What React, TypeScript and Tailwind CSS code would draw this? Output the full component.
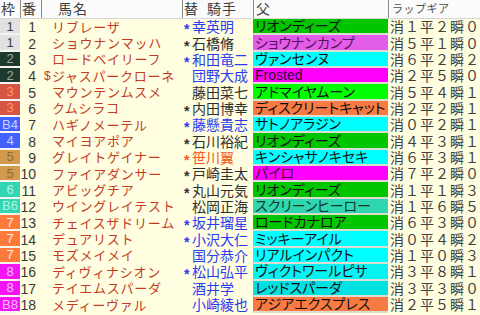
import React from "react";

type Row = {
  w: number;
  n: number;
  label: string;
  pre: string;
  name: string;
  ast: boolean;
  jockey: string;
  jc: string;
  sire: string;
  sc: string;
  st: string;
  lap: string;
};

const WAKU: Record<number, string> = {
  1: "bg-[#e2e2e2] text-[#404040]",
  2: "bg-[#1e3a2c] text-[#9aa8a0]",
  3: "bg-[#d65444] text-[#ff9a60]",
  4: "bg-[#4262ff] text-[#c8d0ff]",
  5: "bg-[#d29a4a] text-[#8a6a40]",
  6: "bg-[#33d6b2] text-[#b0f4e4]",
  7: "bg-[#ff7a3a] text-[#fff0e6]",
  8: "bg-[#f414f4] text-[#ffc0ff]",
};

const BLUE = "text-[#2a3cf0]";
const BLACK = "text-[#303030]";
const ORANGE = "text-[#f25a1e]";

const G = "bg-[#00c600]";
const LIME = "bg-[#00ff00]";
const CY = "bg-[#00ffff]";
const MAG = "bg-[#ff00ff]";
const OR = "bg-[#f97a42]";
const PINK = "bg-[#e25ee8]";
const TEAL = "bg-[#30d6b0]";

const rows: Row[] = [
  { w: 1, n: 1, label: "1", pre: "", name: "リブレーザ", ast: true, jockey: "幸英明", jc: BLUE, sire: "リオンディーズ", sc: G, st: "text-[#101010]", lap: "消１平２瞬０" },
  { w: 1, n: 2, label: "1", pre: "", name: "ショウナンマッハ", ast: true, jockey: "石橋脩", jc: BLACK, sire: "ショウナンカンプ", sc: PINK, st: "text-[#5a1060]", lap: "消５平１瞬０" },
  { w: 2, n: 3, label: "2", pre: "", name: "ロードベイリーフ", ast: true, jockey: "和田竜二", jc: BLUE, sire: "ヴァンセンヌ", sc: CY, st: "text-[#101010]", lap: "消６平２瞬２" },
  { w: 2, n: 4, label: "2", pre: "$", name: "ジャスパークローネ", ast: false, jockey: "団野大成", jc: BLUE, sire: "Frosted", sc: MAG, st: "text-[#301030]", lap: "消２平５瞬０" },
  { w: 3, n: 5, label: "3", pre: "", name: "マウンテンムスメ", ast: false, jockey: "藤田菜七", jc: BLACK, sire: "アドマイヤムーン", sc: LIME, st: "text-[#101010]", lap: "消５平４瞬１" },
  { w: 3, n: 6, label: "3", pre: "", name: "クムシラコ", ast: true, jockey: "内田博幸", jc: BLACK, sire: "ディスクリートキャット", sc: OR, st: "text-[#101010]", lap: "消２平２瞬１" },
  { w: 4, n: 7, label: "B4", pre: "", name: "ハギノメーテル", ast: true, jockey: "藤懸貴志", jc: BLUE, sire: "サトノアラジン", sc: CY, st: "text-[#101010]", lap: "消０平２瞬１" },
  { w: 4, n: 8, label: "4", pre: "", name: "マイヨアポア", ast: true, jockey: "石川裕紀", jc: BLACK, sire: "リオンディーズ", sc: G, st: "text-[#101010]", lap: "消４平３瞬１" },
  { w: 5, n: 9, label: "5", pre: "", name: "グレイトゲイナー", ast: true, jockey: "笹川翼", jc: ORANGE, sire: "キンシャサノキセキ", sc: CY, st: "text-[#101010]", lap: "消６平３瞬１" },
  { w: 5, n: 10, label: "5", pre: "", name: "ファイアダンサー", ast: true, jockey: "戸崎圭太", jc: BLACK, sire: "パイロ", sc: MAG, st: "text-[#301030]", lap: "消７平２瞬０" },
  { w: 6, n: 11, label: "6", pre: "", name: "アビッグチア", ast: true, jockey: "丸山元気", jc: BLACK, sire: "リオンディーズ", sc: G, st: "text-[#101010]", lap: "消１平１瞬３" },
  { w: 6, n: 12, label: "B6", pre: "", name: "ウイングレイテスト", ast: false, jockey: "松岡正海", jc: BLACK, sire: "スクリーンヒーロー", sc: TEAL, st: "text-[#103828]", lap: "消１平６瞬５" },
  { w: 7, n: 13, label: "7", pre: "", name: "チェイスザドリーム", ast: true, jockey: "坂井瑠星", jc: BLUE, sire: "ロードカナロア", sc: G, st: "text-[#101010]", lap: "消６平３瞬０" },
  { w: 7, n: 14, label: "7", pre: "", name: "デュアリスト", ast: true, jockey: "小沢大仁", jc: BLUE, sire: "ミッキーアイル", sc: CY, st: "text-[#101010]", lap: "消０平４瞬２" },
  { w: 7, n: 15, label: "7", pre: "", name: "モズメイメイ", ast: false, jockey: "国分恭介", jc: BLUE, sire: "リアルインパクト", sc: CY, st: "text-[#101010]", lap: "消１平０瞬３" },
  { w: 8, n: 16, label: "8", pre: "", name: "ディヴィナシオン", ast: true, jockey: "松山弘平", jc: BLUE, sire: "ヴィクトワールピサ", sc: "bg-[#08f2f2]", st: "text-[#101010]", lap: "消３平８瞬１" },
  { w: 8, n: 17, label: "8", pre: "", name: "テイエムスパーダ", ast: false, jockey: "酒井学", jc: BLUE, sire: "レッドスパーダ", sc: "bg-[#00e2e2]", st: "text-[#101010]", lap: "消３平３瞬０" },
  { w: 8, n: 18, label: "B8", pre: "", name: "メディーヴァル", ast: false, jockey: "小崎綾也", jc: BLUE, sire: "アジアエクスプレス", sc: OR, st: "text-[#101010]", lap: "消２平５瞬１" },
];

export default function App() {
  return (
    <div className="w-[480px] h-[315px] overflow-hidden bg-[#fffee0] font-['Liberation_Sans','Noto_Sans_CJK_JP',sans-serif] leading-none">
      <div className="flex h-[19px] bg-[#fbfbfb] border-b border-[#d6d6d6] text-[#404040] text-[14px]">
        <div className="w-[20px] shrink-0 flex items-center pl-[1px]">枠</div>
        <div className="w-[21px] shrink-0 flex items-center pl-[1px] border-l border-[#8a8a8a]">番</div>
        <div className="w-[141px] shrink-0 flex items-center pl-[16px] border-l border-[#8a8a8a] tracking-[1px]">馬名</div>
        <div className="w-[71px] shrink-0 flex items-center pl-[1px] border-l border-[#8a8a8a] gap-[9px]">
          <span>替</span>
          <span className="tracking-[1px]">騎手</span>
        </div>
        <div className="w-[135px] shrink-0 flex items-center pl-[2px] border-l border-[#8a8a8a]">父</div>
        <div className="flex-1 flex items-center pl-[3px] border-l border-[#8a8a8a] text-[11px] tracking-[0.5px] text-[#505050]">ラップギア</div>
      </div>
      {rows.map((r) => (
        <div key={r.n} className="flex h-[16.35px]">
          <div className={`w-[20px] shrink-0 flex items-center justify-center text-[13px] border-b-2 border-[#f4f4f0] ${WAKU[r.w]}`}>
            {r.label}
          </div>
          <div className="w-[21px] shrink-0 flex items-center justify-end pr-[5px] text-[14px] text-[#3a3a3a]">{r.n}</div>
          <div className="w-[141px] shrink-0 flex items-center pl-[3px] text-[13px] tracking-[0.75px] text-[#c43a24] whitespace-nowrap">
            <span className="w-[8px] shrink-0 text-[12px] tracking-normal">{r.pre}</span>
            <span>{r.name}</span>
          </div>
          <div className={`w-[71px] shrink-0 flex items-center pl-[2px] text-[14px] whitespace-nowrap ${r.jc}`}>
            <span className="w-[8px] shrink-0 text-[14px] font-bold translate-y-[2px]">{r.ast ? "*" : ""}</span>
            <span>{r.jockey}</span>
          </div>
          <div className={`w-[135px] shrink-0 flex items-center pl-[2px] text-[14px] whitespace-nowrap border-b-2 border-[#dcdcd0] [font-feature-settings:'palt'] ${r.sc} ${r.st}`}>
            {r.sire}
          </div>
          <div className="flex-1 flex items-center pl-[2px] text-[14px] tracking-[1px] text-[#404040] whitespace-nowrap">{r.lap}</div>
        </div>
      ))}
    </div>
  );
}
